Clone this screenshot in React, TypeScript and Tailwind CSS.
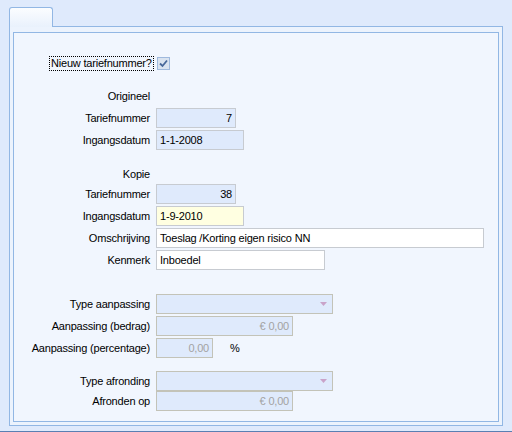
import type { ReactNode } from 'react'

function Row({ label, children, className = '' }: { label: string; children?: ReactNode; className?: string }) {
  return (
    <div className={`flex items-center h-[20px] ${className}`}>
      <div className="w-[136px] text-right whitespace-nowrap">{label}</div>
      <div className="ml-[6px] flex items-center">{children}</div>
    </div>
  )
}

function Field({
  value,
  w,
  tone = 'white',
  right = false,
  disabled = false,
}: {
  value: string
  w: string
  tone?: 'white' | 'blue' | 'yellow'
  right?: boolean
  disabled?: boolean
}) {
  const bg = tone === 'blue' ? 'bg-[#dfeafc]' : tone === 'yellow' ? 'bg-[#ffffe1]' : 'bg-white'
  const border = disabled ? 'border-[#c3c3b8]' : 'border-[#c7cbd1]'
  const color = disabled ? 'text-[#a3a3a3]' : 'text-black'
  return (
    <div
      className={`${w} h-[20px] border ${border} ${bg} ${color} flex items-center px-[3px] ${right ? 'justify-end' : ''}`}
    >
      {value}
    </div>
  )
}

function Combo() {
  return (
    <div className="w-[177px] h-[20px] border border-[#c3c3b8] bg-[#dfeafc] flex items-center justify-end pr-[5px]">
      <svg width="7" height="4" viewBox="0 0 7 4">
        <path d="M0 0H7L3.5 4Z" fill="#c9a3c9" />
      </svg>
    </div>
  )
}

export default function App() {
  return (
    <div
      className="w-[512px] h-[432px] bg-[#dfeafc] flex flex-col text-[11px] leading-none text-black tracking-[-0.2px]"
      style={{ fontFamily: '"Liberation Sans", Arial, sans-serif' }}
    >
      <div className="pt-[7px] pl-[9px]">
        <div className="relative z-10 w-[44px] h-[20px] -mb-px rounded-t-[3px] border border-b-0 border-[#92b7e4] bg-gradient-to-b from-[#fbfdff] to-[#e9f1fc]" />
      </div>
      <div className="ml-[9px] w-[494px] h-[400px] border border-[#92b7e4] bg-[#ecf3fd] pt-[5px] px-[3px] pb-[3px]">
        <div className="w-full h-full border border-[#92b7e4] bg-[#f1f6fe] pt-[23px]">
          <div className="flex items-center h-[15px]">
            <div className="ml-[35px] border border-dotted border-black px-[1px] h-[15px] flex items-center">
              Nieuw tariefnummer?
            </div>
            <div className="ml-[3px] w-[13px] h-[13px] border border-[#9fb9dd] bg-[#d9e3f0] flex items-center justify-center">
              <svg width="9" height="9" viewBox="0 0 9 9">
                <path d="M1 4.5L3.5 7L8 1.5" stroke="#47679a" strokeWidth="1.8" fill="none" />
              </svg>
            </div>
          </div>

          <Row label="Origineel" className="mt-[15px]" />
          <Row label="Tariefnummer" className="mt-[2px]">
            <Field value="7" w="w-[80px]" tone="blue" right />
          </Row>
          <Row label="Ingangsdatum" className="mt-[2px]">
            <Field value="1-1-2008" w="w-[88px]" tone="blue" />
          </Row>

          <Row label="Kopie" className="mt-[14px]" />
          <Row label="Tariefnummer" className="mt-0">
            <Field value="38" w="w-[80px]" tone="blue" right />
          </Row>
          <Row label="Ingangsdatum" className="mt-[2px]">
            <Field value="1-9-2010" w="w-[88px]" tone="yellow" />
          </Row>
          <Row label="Omschrijving" className="mt-[2px]">
            <Field value="Toeslag /Korting eigen risico NN" w="w-[328px]" />
          </Row>
          <Row label="Kenmerk" className="mt-[2px]">
            <Field value="Inboedel" w="w-[169px]" />
          </Row>

          <Row label="Type aanpassing" className="mt-[24px]">
            <Combo />
          </Row>
          <Row label="Aanpassing (bedrag)" className="mt-[2px]">
            <Field value="€ 0,00" w="w-[137px]" tone="blue" right disabled />
          </Row>
          <Row label="Aanpassing (percentage)" className="mt-[2px]">
            <Field value="0,00" w="w-[57px]" tone="blue" right disabled />
            <span className="ml-[17px]">%</span>
          </Row>

          <Row label="Type afronding" className="mt-[13px]">
            <Combo />
          </Row>
          <Row label="Afronden op" className="mt-0">
            <Field value="€ 0,00" w="w-[137px]" tone="blue" right disabled />
          </Row>
        </div>
      </div>
      <div className="flex-1" />
      <div className="h-px bg-[#5a7fb2]" />
    </div>
  )
}
